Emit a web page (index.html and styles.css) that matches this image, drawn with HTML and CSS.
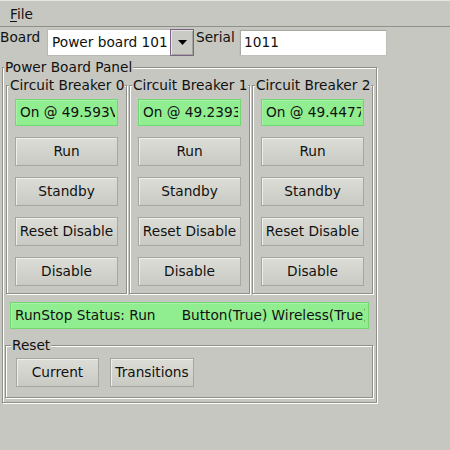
FILE: index.html
```html
<!DOCTYPE html>
<html>
<head>
<meta charset="utf-8">
<link rel="stylesheet" href="styles.css">
</head>
<body>
<div class="menubar"><span class="menu"><u>F</u>ile</span></div>
<div class="toprow">
  <div class="lbl lbl-board">Board</div>
  <div class="combo">
    <div class="combo-field"><span class="clip">Power board 1011</span></div>
    <div class="combo-btn"><svg width="9" height="5" viewBox="0 0 9 5"><path d="M0 0H9L4.5 5Z" fill="#000"/></svg></div>
  </div>
  <div class="lbl lbl-serial">Serial</div>
  <div class="textfield">1011</div>
</div>
<div class="group panel">
  <div class="gtitle panel-title">Power Board Panel</div>
  <div class="breakers">
    <div class="group cb">
      <div class="gtitle cb-title">Circuit Breaker 0</div>
      <div class="status cb-status"><span class="clip">On @ 49.593V</span></div>
      <div class="btn cb-btn">Run</div>
      <div class="btn cb-btn">Standby</div>
      <div class="btn cb-btn">Reset Disable</div>
      <div class="btn cb-btn">Disable</div>
    </div>
    <div class="group cb">
      <div class="gtitle cb-title">Circuit Breaker 1</div>
      <div class="status cb-status"><span class="clip">On @ 49.2393V</span></div>
      <div class="btn cb-btn">Run</div>
      <div class="btn cb-btn">Standby</div>
      <div class="btn cb-btn">Reset Disable</div>
      <div class="btn cb-btn">Disable</div>
    </div>
    <div class="group cb">
      <div class="gtitle cb-title">Circuit Breaker 2</div>
      <div class="status cb-status"><span class="clip">On @ 49.4477V</span></div>
      <div class="btn cb-btn">Run</div>
      <div class="btn cb-btn">Standby</div>
      <div class="btn cb-btn">Reset Disable</div>
      <div class="btn cb-btn">Disable</div>
    </div>
  </div>
  <div class="status runstop"><span class="clip pre">RunStop Status: Run      Button(True) Wireless(True)</span></div>
  <div class="group reset">
    <div class="gtitle reset-title">Reset</div>
    <div class="reset-row">
      <div class="btn btn-current">Current</div>
      <div class="btn btn-trans">Transitions</div>
    </div>
  </div>
</div>
</body>
</html>
```

FILE: styles.css
```css
html, body {
  margin: 0;
  padding: 0;
}
body {
  width: 450px;
  height: 450px;
  background: #c6c7c0;
  font-family: "DejaVu Sans", sans-serif;
  font-size: 13.7px;
  line-height: 16px;
  color: #111;
  overflow: hidden;
}
.menubar {
  box-sizing: border-box;
  height: 27px;
  border-top: 1px solid #e4e4e0;
  border-bottom: 1px solid #8f908a;
  padding: 5px 0 0 10px;
}
.menu u {
  text-decoration: underline;
  text-underline-offset: 2px;
}
.toprow {
  display: flex;
  margin-top: 2px;
  height: 27px;
}
.lbl {
  padding-top: 0;
  white-space: nowrap;
}
.lbl-board {
  width: 47px;
}
.combo {
  width: 147px;
  display: flex;
  box-sizing: border-box;
}
.combo-field {
  flex: 1;
  min-width: 0;
  background: #fff;
  border: 1px solid #b8b9b3;
  border-right: none;
  padding: 0 3px 0 4px;
  line-height: 25px;
}
.combo-btn {
  box-sizing: border-box;
  flex: 0 0 24px;
  border: 1px solid #7c6486;
  background: #c9cac3;
  box-shadow: inset 1px 1px 0 #e4e4df, inset -1px -1px 0 #a3a49e;
  display: flex;
  align-items: center;
  justify-content: center;
}
.lbl-serial {
  margin-left: 2px;
  width: 43px;
}
.textfield {
  box-sizing: border-box;
  width: 148px;
  background: #fff;
  border: 1px solid #c0c1bb;
  box-shadow: inset 1px 1px 0 #a9aaa4;
  padding-left: 4px;
  line-height: 25px;
}
.group {
  border: 1px solid #8f908a;
  box-shadow: inset 1px 1px 0 #fff, 1px 1px 0 #fff;
}
.gtitle {
  width: fit-content;
  margin-top: -9px;
  background: #c6c7c0;
  padding: 0 1px;
  white-space: nowrap;
}
.panel {
  margin: 11px 0 0 2px;
  width: 375px;
  box-sizing: border-box;
  padding: 0 3px 4px 3px;
}
.panel-title {
  margin-left: -2px;
}
.breakers {
  display: grid;
  grid-template-columns: 121px 121px 121px;
  column-gap: 2px;
  margin-top: 10px;
}
.cb {
  box-sizing: border-box;
  padding: 0 8px 7px 8px;
}
.cb-title {
  margin-left: -6px;
}
.status {
  box-sizing: border-box;
  height: 27px;
  background: #90ee90;
  border: 1px solid #72d672;
  box-shadow: inset 1px 1px 0 #a6f3a6;
  padding: 0 2px 0 4px;
  line-height: 25px;
}
.clip {
  display: block;
  overflow: hidden;
  white-space: nowrap;
}
.pre {
  white-space: pre;
}
.cb-status {
  margin-top: 6px;
}
.btn {
  box-sizing: border-box;
  height: 29px;
  border: 1px solid #a6a7a1;
  background: linear-gradient(#dcddd7, #c9cac3);
  box-shadow: inset 1px 1px 0 #eeeeea;
  text-align: center;
  line-height: 27px;
  white-space: nowrap;
}
.cb-btn {
  margin-top: 11px;
}
.runstop {
  margin: 8px 0 0 4px;
  width: 359px;
  padding-right: 3px;
}
.reset {
  margin: 16px 0 0 -1px;
  width: 368px;
  box-sizing: border-box;
  padding: 0 10px 10px 10px;
}
.reset-title {
  margin-left: -5px;
}
.reset-row {
  display: flex;
  gap: 11px;
  margin-top: 5px;
}
.btn-current {
  width: 83px;
}
.btn-trans {
  width: 84px;
}
```
